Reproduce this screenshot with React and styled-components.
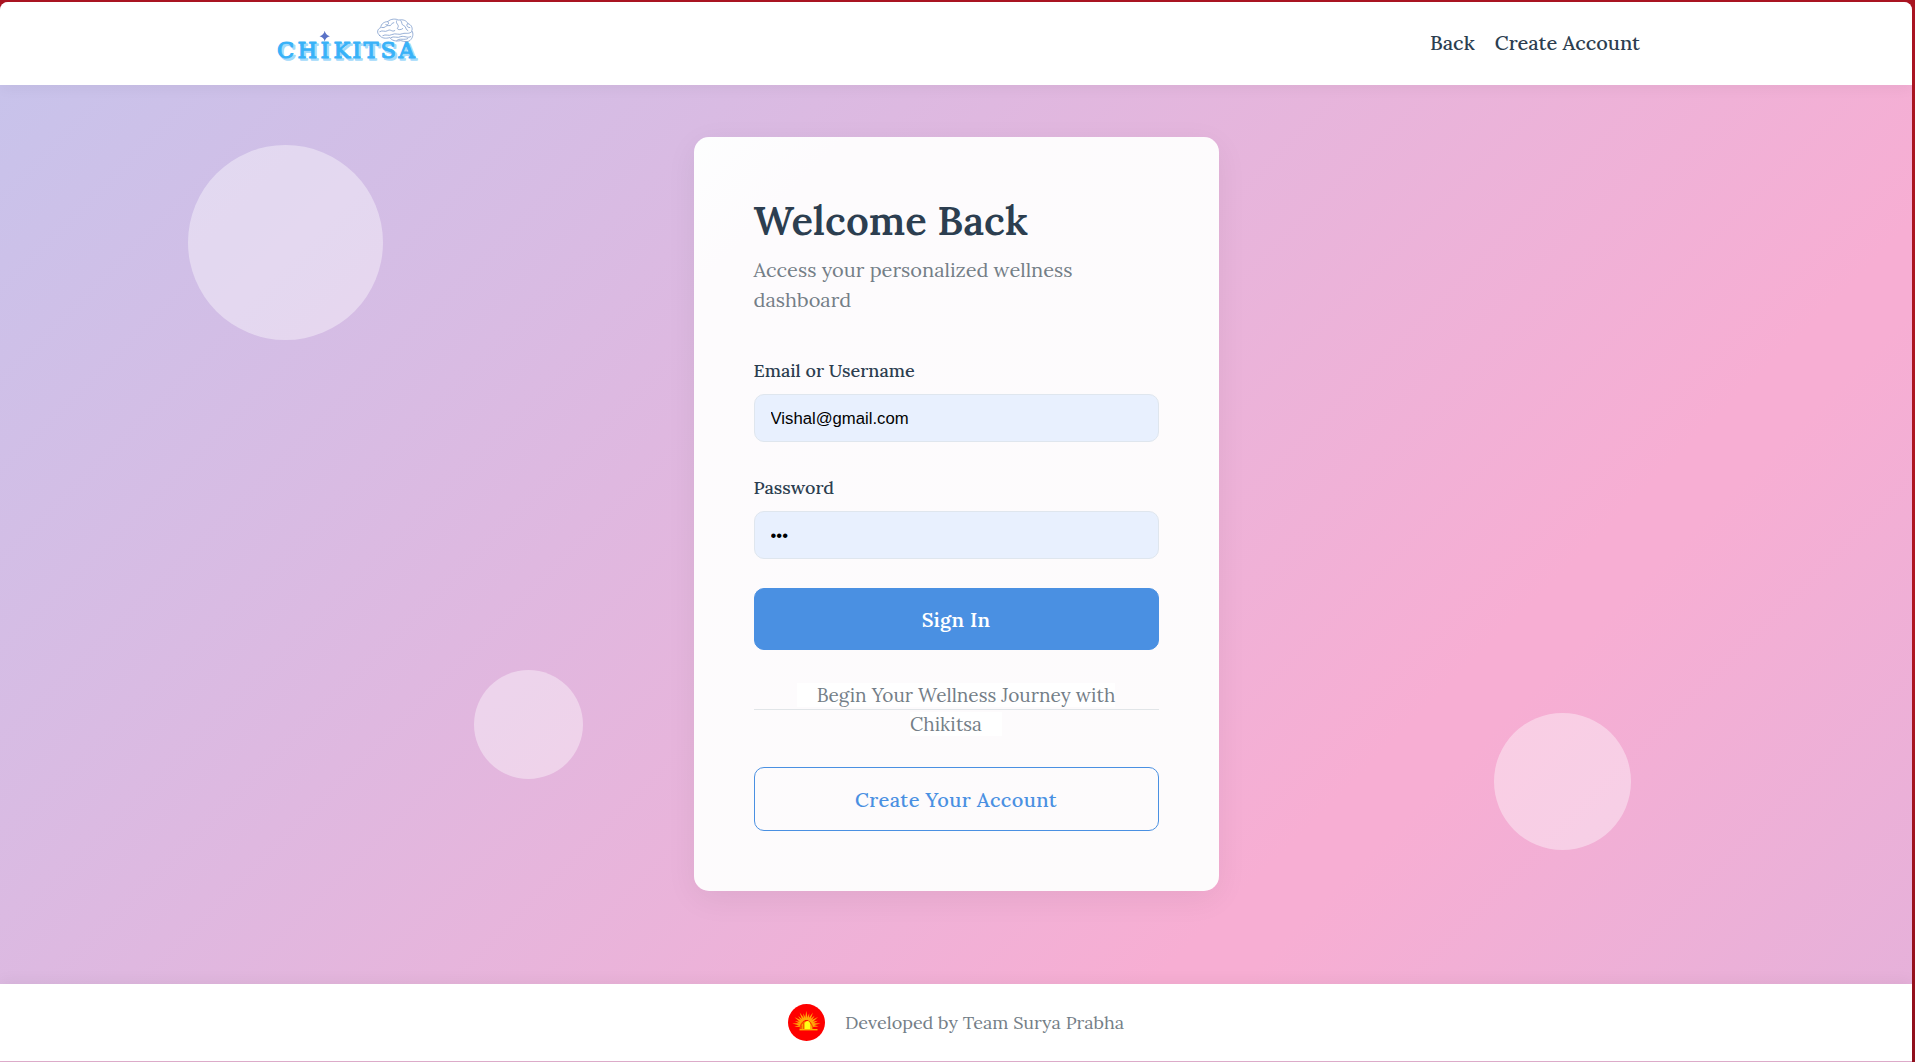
import React from "react";
import styled, { createGlobalStyle } from "styled-components";

const GlobalStyle = createGlobalStyle`
  *, *::before, *::after { box-sizing: border-box; }
  body { margin: 0; background: #a91421; }
`;

const serif = `Lora, "Liberation Serif", serif`;

const Frame = styled.div`
  height: 1062px;
  padding: 2px 3px 0 0;
  background: linear-gradient(180deg, #a91421 0%, #b01622 60%, #8f0f1c 100%);
  overflow: hidden;
`;

const Page = styled.div`
  height: 100%;
  display: flex;
  flex-direction: column;
  border-radius: 8px 8px 0 0;
  overflow: hidden;
  background: #e0aecd;
  font-family: ${serif};
  color: #2c3e50;
`;

const Header = styled.header`
  position: relative;
  z-index: 2;
  flex: none;
  height: 83px;
  background: #fff;
  box-shadow: 0 2px 15px rgba(0, 0, 0, 0.05);
  display: flex;
  justify-content: center;
`;

const HeaderInner = styled.div`
  width: 1368px;
  display: flex;
  justify-content: space-between;
  align-items: flex-start;
`;

const Logo = styled.svg`
  display: block;
  width: 152px;
  height: 70px;
`;

const Nav = styled.nav`
  display: flex;
  gap: 20px;
  padding-top: 28px;
`;

const NavLink = styled.a`
  font-size: 20px;
  line-height: 26px;
  font-weight: 500;
  color: #2c3e50;
  white-space: nowrap;
`;

const Main = styled.main`
  position: relative;
  flex: none;
  height: 899px;
  padding-top: 52px;
  display: flex;
  justify-content: center;
  align-items: flex-start;
  background: linear-gradient(135deg, #c8c3eb 0%, #dfb8e0 36%, #f7aed3 73%, #f7aed3 76%, #e6b1da 100%);
`;

const Bubble = styled.div`
  position: absolute;
  left: ${(p) => p.$x}px;
  top: ${(p) => p.$y}px;
  width: ${(p) => p.$size}px;
  height: ${(p) => p.$size}px;
  border-radius: 50%;
  background: rgba(255, 255, 255, 0.4);
`;

const Card = styled.section`
  position: relative;
  width: 525px;
  height: 754px;
  padding: 60px;
  border-radius: 15px;
  background: linear-gradient(135deg, #fdfefe 0%, #fdfbfd 12%, #fdfbfc 100%);
  box-shadow: 0 8px 32px rgba(0, 0, 0, 0.06);
`;

const Title = styled.h1`
  margin: 0;
  font-size: 40px;
  line-height: 48px;
  font-weight: 600;
  color: #2c3e50;
`;

const Subtitle = styled.p`
  margin: 10px 0 44px;
  font-size: 20px;
  line-height: 30px;
  color: #747e87;
`;

const Field = styled.div`
  display: flex;
  flex-direction: column;
  height: 117px;
`;

const Label = styled.label`
  margin-bottom: 11px;
  font-size: 18px;
  line-height: 24px;
  font-weight: 500;
`;

const Input = styled.input`
  width: 100%;
  height: 47.5px;
  padding: 3px 16px 0;
  border: 1px solid #dfe6ee;
  border-radius: 10px;
  background: #e8f0fe;
  color: #000;
  outline: none;
  font-family: Arial, "Liberation Sans", sans-serif;
  font-size: 16.7px;
`;

const Button = styled.button`
  display: block;
  width: 100%;
  height: ${(p) => (p.$outline ? 64 : 62)}px;
  margin-top: ${(p) => (p.$outline ? 28 : -5)}px;
  padding: 0;
  border: 1px solid #4a90e2;
  border-radius: 10px;
  background: ${(p) => (p.$outline ? "transparent" : "#4a90e2")};
  color: ${(p) => (p.$outline ? "#4a90e2" : "#fff")};
  font-family: ${serif};
  font-size: 20px;
  font-weight: ${(p) => (p.$outline ? 500 : 600)};
  letter-spacing: ${(p) => (p.$outline ? "0.4px" : "0.3px")};
`;

const Divider = styled.div`
  position: relative;
  margin-top: 31px;
  font-size: 19px;
  line-height: 29px;
  text-align: center;
  color: #747e87;

  &::before {
    content: "";
    position: absolute;
    left: 0;
    right: 0;
    top: 28px;
    height: 1px;
    background: #e1e5e8;
  }
`;

const DividerText = styled.span`
  position: relative;
  padding: 0 20px;
  background: #fff;
`;

const Footer = styled.footer`
  position: relative;
  flex: none;
  height: 77px;
  background: #fff;
  box-shadow: 0 -2px 15px rgba(0, 0, 0, 0.05);
  display: flex;
  justify-content: center;
  align-items: center;
  gap: 20px;
`;

const Sun = styled.svg`
  display: block;
  width: 37px;
  height: 37px;
`;

const Credit = styled.span`
  font-size: 18px;
  line-height: 24px;
  color: #747e87;
  white-space: nowrap;
`;

const letterX = "13.6 35.3 53 69.8 84.8 99 116.3 134.5";

function Wordmark() {
  return (
    <Logo viewBox="0 0 152 70" role="img" aria-label="Chikitsa">
      <g fontFamily="'DejaVu Serif', serif" fontSize="22.5" textAnchor="middle" strokeLinejoin="round">
        <text x={letterX} y="56" fill="#a3dafb" stroke="#a3dafb" strokeWidth="1.6" transform="translate(2 1.8)" aria-hidden="true">
          CHIKITSA
        </text>
        <text x={letterX} y="56" fill="#38b2f8" stroke="#38b2f8" strokeWidth="1.1">
          CHIKITSA
        </text>
      </g>
      <path d="M52.7 28.8 Q53.6 33.2 57.9 34.2 Q53.6 35.1 52.7 39.4 Q51.8 35.1 47.5 34.2 Q51.8 33.2 52.7 28.8Z" fill="#5a72c6" />
      <g fill="none" stroke="#7595c8" strokeWidth="0.75" strokeLinecap="round" strokeLinejoin="round" transform="translate(0.8 0.6)">
        <path d="M107 33 C103 30 105 26 108 25 C108 21 112 19 115 19 C118 16 123 16 126 17.5 C130 16.5 134 18 135 21 C139 22 140 26 139 28 C141 31 140 35 138 37 C136 40 131 39 128 38 C123 39 119 38 117 35 C113 36 109 36 107 33Z" />
        <path d="M107 29 C110 27 112 30 115 28 C118 26 119 30 122 28 M109 25 C113 26 113 22 116 23 C119 24 118 20 121 20 M115 19 C117 21 115 23 113 22" />
        <path d="M124 18 C122 21 127 22 125 25 C123 27 128 28 130 26 M128 18 C130 20 128 22 131 23 C134 24 132 27 135 28 M135 21 C133 22 134 25 137 25" />
        <path d="M110 33 C113 31 116 34 119 32 C123 30 126 33 130 31 C133 30 136 32 139 29 M118 35 C121 33 125 36 128 34 C132 33 135 36 138 34 M124 38 C126 35 132 38 135 36" />
      </g>
    </Logo>
  );
}

const rays = Array.from({ length: 15 }, (_, i) => -98 + i * 14);

function SunBadge() {
  return (
    <Sun viewBox="0 0 37 37" aria-hidden="true">
      <circle cx="18.5" cy="18.5" r="18.5" fill="#fe0000" />
      {rays.map((angle, i) => (
        <path
          key={angle}
          d={i % 2 ? "M16.9 16 L18.3 6.8 L19.8 16Z" : "M17 16 L18.3 8.8 L19.7 16Z"}
          fill="#ffa808"
          transform={`rotate(${angle} 18.4 21)`}
        />
      ))}
      <path d="M11.5 25 C11 14 25.5 14 25.2 25Z" fill="#fe4a00" />
      <path d="M13 25 C12.5 15.5 24.4 15.5 24 25Z" fill="#ffb305" />
      <path d="M17 26 V19.5 C17.2 16.2 21.8 16.2 22 19.5 V26Z" fill="#ffff16" />
      <path d="M15.4 19 V25 M13.7 21.5 V25" stroke="#ee4500" strokeWidth="0.9" />
      <rect x="11.5" y="25" width="18" height="1.4" fill="#ffb000" />
    </Sun>
  );
}

export default function App() {
  return (
    <Frame>
      <GlobalStyle />
      <Page>
        <Header>
          <HeaderInner>
            <Wordmark />
            <Nav>
              <NavLink>Back</NavLink>
              <NavLink>Create Account</NavLink>
            </Nav>
          </HeaderInner>
        </Header>
        <Main>
          <Bubble $x={187.5} $y={60} $size={195} />
          <Bubble $x={473.5} $y={585} $size={109} />
          <Bubble $x={1494} $y={628} $size={137} />
          <Card>
            <Title>Welcome Back</Title>
            <Subtitle>Access your personalized wellness dashboard</Subtitle>
            <Field>
              <Label htmlFor="login">Email or Username</Label>
              <Input id="login" type="text" defaultValue="Vishal@gmail.com" />
            </Field>
            <Field>
              <Label htmlFor="password">Password</Label>
              <Input id="password" type="password" defaultValue="123" />
            </Field>
            <Button>Sign In</Button>
            <Divider>
              <DividerText>Begin Your Wellness Journey with Chikitsa</DividerText>
            </Divider>
            <Button $outline>Create Your Account</Button>
          </Card>
        </Main>
        <Footer>
          <SunBadge />
          <Credit>Developed by Team Surya Prabha</Credit>
        </Footer>
      </Page>
    </Frame>
  );
}
